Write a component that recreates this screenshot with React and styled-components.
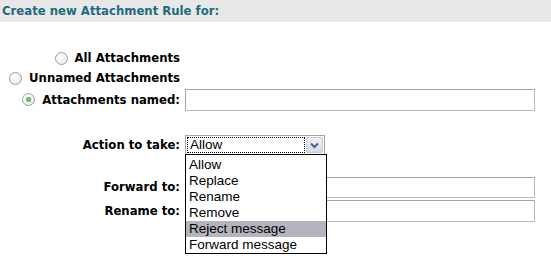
import React from 'react';
import styled, { createGlobalStyle } from 'styled-components';

const Global = createGlobalStyle`
  html, body {
    margin: 0;
    padding: 0;
    background: #fff;
  }
  body {
    font-family: "DejaVu Sans", Verdana, sans-serif;
  }
`;

const Page = styled.div`
  width: 551px;
  height: 274px;
  overflow: hidden;
`;

const HeaderBar = styled.div`
  height: 22px;
  background: #e8e8e8;
  display: flex;
  align-items: center;
  padding-left: 2px;
  font-size: 11.7px;
  font-weight: bold;
  color: #1f6c7e;
`;

const Form = styled.div`
  display: flex;
  flex-direction: column;
  padding-top: 26px;
`;

const Row = styled.div`
  display: grid;
  grid-template-columns: 180px 350px;
  column-gap: 5px;
  align-items: center;
  height: ${p => p.h}px;
  margin-top: ${p => p.mt || 0}px;
  position: relative;
`;

const Label = styled.label`
  display: flex;
  align-items: center;
  justify-content: flex-end;
  font-size: 11.7px;
  font-weight: bold;
  color: #000;
  white-space: nowrap;
`;

const Radio = styled.span`
  width: 13px;
  height: 13px;
  box-sizing: border-box;
  border-radius: 50%;
  border: 1px solid #9a9ea6;
  background: radial-gradient(circle at 35% 35%, #ffffff 0%, #f2f2ee 55%, #dcdcd6 100%);
  margin-right: 7px;
  display: flex;
  align-items: center;
  justify-content: center;

  &::after {
    content: '';
    width: 5px;
    height: 5px;
    border-radius: 50%;
    background: ${p => (p.checked ? 'radial-gradient(circle, #7ee07a 0%, #2f9a2c 100%)' : 'transparent')};
  }
`;

const TextInput = styled.div`
  height: ${p => p.h || 22}px;
  box-sizing: border-box;
  border: 1px solid #a5a5a5;
  border-right-color: #b8b8b8;
  border-bottom-color: #b8b8b8;
  background: #fff;
`;

const Select = styled.div`
  width: 140px;
  height: 20px;
  box-sizing: border-box;
  border: 1px solid #a5a5a5;
  display: flex;
  align-items: stretch;
  padding: 1px;
  background: #fff;
`;

const SelectValue = styled.div`
  flex: 1;
  border: 1px dotted #000;
  font-family: "Liberation Sans", Arial, sans-serif;
  font-size: 13.5px;
  line-height: 14px;
  padding-left: 2px;
  display: flex;
  align-items: center;
`;

const ArrowButton = styled.div`
  width: 17px;
  margin-left: 1px;
  box-sizing: border-box;
  border: 1px solid #c3cad8;
  border-radius: 2px;
  background: linear-gradient(#eef0f6, #d6dae6);
  display: flex;
  align-items: center;
  justify-content: center;
`;

const DropList = styled.div`
  position: absolute;
  left: 185px;
  top: 19px;
  width: 142px;
  box-sizing: border-box;
  border: 1px solid #000;
  background: #fff;
  z-index: 2;
  padding-top: 2px;
`;

const Option = styled.div`
  height: 16px;
  line-height: 16px;
  padding-left: 3px;
  font-family: "Liberation Sans", Arial, sans-serif;
  font-size: 13.5px;
  color: #000;
  background: ${p => (p.active ? '#b4b4be' : 'transparent')};
`;

const options = ['Allow', 'Replace', 'Rename', 'Remove', 'Reject message', 'Forward message'];

export default function App() {
  return (
    <Page>
      <Global />
      <HeaderBar>Create new Attachment Rule for:</HeaderBar>
      <Form>
        <Row h={20}>
          <Label><Radio />All Attachments</Label>
        </Row>
        <Row h={20}>
          <Label><Radio />Unnamed Attachments</Label>
        </Row>
        <Row h={23}>
          <Label><Radio checked />Attachments named:</Label>
          <TextInput />
        </Row>
        <Row h={20} mt={24}>
          <Label>Action to take:</Label>
          <Select>
            <SelectValue>Allow</SelectValue>
            <ArrowButton>
              <svg width="9" height="7" viewBox="0 0 9 7">
                <path d="M1 1.5 L4.5 5 L8 1.5" fill="none" stroke="#4d6185" strokeWidth="2" />
              </svg>
            </ArrowButton>
          </Select>
          <DropList>
            {options.map(o => (
              <Option key={o} active={o === 'Reject message'}>{o}</Option>
            ))}
          </DropList>
        </Row>
        <Row h={22} mt={21}>
          <Label>Forward to:</Label>
          <TextInput h={21} />
        </Row>
        <Row h={22} mt={2}>
          <Label>Rename to:</Label>
          <TextInput />
        </Row>
      </Form>
    </Page>
  );
}
